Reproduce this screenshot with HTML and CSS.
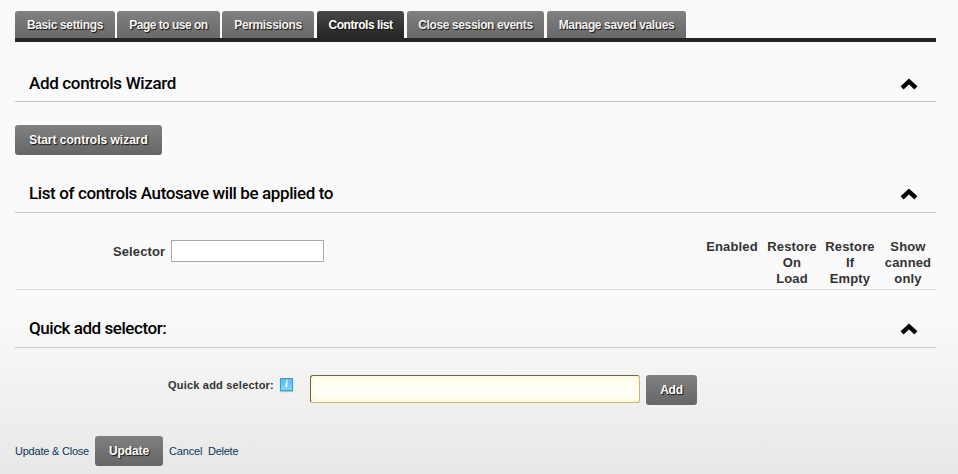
FILE: index.html
```html
<!DOCTYPE html>
<html lang="en">
<head>
<meta charset="utf-8">
<title>Autosave settings</title>
<link rel="stylesheet" href="styles.css">
</head>
<body>
<svg class="symbols" aria-hidden="true"><symbol id="chevron" viewBox="0 0 18 12"><path d="M2.1 9.8 9 3.4l6.9 6.4" fill="none" stroke="#000" stroke-width="4.4"/></symbol></svg>
<nav class="tabs">
<a class="tab basic"><span>Basic settings</span></a>
<a class="tab page"><span>Page to use on</span></a>
<a class="tab permissions"><span>Permissions</span></a>
<a class="tab controls active"><span>Controls list</span></a>
<a class="tab session"><span>Close session events</span></a>
<a class="tab saved"><span>Manage saved values</span></a>
</nav>
<section class="wizard">
<header class="heading"><h2 class="title-wizard">Add controls Wizard</h2><svg class="chevron"><use href="#chevron"/></svg></header>
<button class="button start"><span>Start controls wizard</span></button>
</section>
<section class="list">
<header class="heading"><h2 class="title-list">List of controls Autosave will be applied to</h2><svg class="chevron"><use href="#chevron"/></svg></header>
<div class="filter">
<label for="selector">Selector</label><input id="selector" class="selector">
<div class="columns"><span>Enabled</span><span>Restore<br>On<br>Load</span><span>Restore<br>If<br>Empty</span><span>Show<br>canned<br>only</span></div>
</div>
</section>
<section class="quick">
<header class="heading"><h2 class="title-quick">Quick add selector:</h2><svg class="chevron"><use href="#chevron"/></svg></header>
<div class="quick-row">
<label for="quick">Quick add selector:</label>
<span class="info">i</span>
<input id="quick" class="quick-input">
<button class="button add"><span>Add</span></button>
</div>
</section>
<footer class="actions"><a class="update-close">Update &amp; Close</a><button class="button update"><span>Update</span></button><a class="cancel">Cancel</a><a class="delete">Delete</a></footer>
</body>
</html>
```
FILE: styles.css
```css
* { box-sizing: border-box; }
html { height: 100%; }
body {
  margin: 0;
  height: 474px;
  padding: 11px 22px 0 15px;
  overflow: hidden;
  color: #333;
  font-family: "Liberation Sans", Arial, sans-serif;
  background: linear-gradient(#fafafa 0, #fafafa 310px, #e8e8e8 474px);
}
.symbols { display: none; }
.tabs { display: flex; height: 31px; border-bottom: 4px solid #262626; }
.tab {
  height: 27px;
  margin-right: 2px;
  border-radius: 3px 3px 0 0;
  background: linear-gradient(#808080, #696969);
  color: #f2f2f2;
  font-size: 12px;
  font-weight: bold;
  line-height: 28px;
  text-align: center;
  white-space: nowrap;
  text-shadow: 1px 1px 1px #111;
}
.basic { width: 100px; letter-spacing: -.38px; }
.page { width: 103px; letter-spacing: -.5px; }
.permissions { width: 92px; margin-right: 3px; letter-spacing: -.35px; }
.controls { width: 87px; margin-right: 3px; letter-spacing: -.45px; }
.session { width: 137px; margin-right: 3px; letter-spacing: -.38px; }
.saved { width: 139px; margin-right: 0; letter-spacing: -.38px; }
.tab.active { color: #fff; background: linear-gradient(#484848, #252525); }
.heading {
  display: flex;
  justify-content: space-between;
  height: 38px;
  padding: 0 18px 0 14px;
  border-bottom: 1px solid #c8c8c8;
}
h2 {
  margin: 0;
  color: #000;
  font: 500 17px/38px Roboto, sans-serif;
  white-space: nowrap;
}
.title-wizard { letter-spacing: -.34px; }
.title-list { letter-spacing: -.39px; }
.title-quick { letter-spacing: -.45px; }
.chevron { width: 18px; height: 12px; margin-top: 14px; }
.wizard { height: 132px; padding-top: 22px; }
.list { height: 116px; }
.list .heading, .quick .heading { height: 39px; }
.filter {
  display: flex;
  height: 77px;
  padding: 27px 0 0 98px;
  border-bottom: 1px solid #dcdcdc;
}
.filter label { width: 58px; font: bold 13px/23px "Liberation Sans", sans-serif; letter-spacing: .1px; }
.selector { width: 153px; height: 22px; border: 1px solid #a9a9a9; background: #fff; }
.columns {
  display: grid;
  grid-template-columns: 62px 58px 58px 58px;
  margin: -1px -1px 0 auto;
  width: 236px;
  font: bold 13px/16px "Liberation Sans", sans-serif;
  letter-spacing: .15px;
  text-align: center;
}
.quick { height: 146px; padding-top: 19px; }
.quick-row { display: flex; padding: 27px 0 0 153px; }
.quick-row label { width: 112px; font-size: 11px; font-weight: bold; line-height: 20px; letter-spacing: .2px; white-space: nowrap; }
.info {
  width: 13px;
  height: 13px;
  margin: 3px 17px 0 0;
  border: 1px solid #3a9fd2;
  box-shadow: 0 1px 1px #b9bdc0;
  background: linear-gradient(#5abbea, #85d3f4);
  color: #fff;
  font: italic bold 10px/10px "Liberation Serif", serif;
  text-align: center;
}
.quick-input {
  width: 330px;
  height: 28px;
  border: 1px solid;
  border-color: #6a6548 #c2b88b #c2b88b #6a6548;
  border-radius: 3px;
  background: #fffff5;
  box-shadow: inset 0 0 6px #fff1c4;
}
.button {
  display: block;
  height: 30px;
  padding: 0;
  border: 0;
  border-radius: 3px;
  background: linear-gradient(#808080, #666);
  color: #fff;
  font: bold 12px/30px "Liberation Sans", sans-serif;
  text-shadow: 1px 1px 1px #111;
}
.start { width: 147px; margin-top: 23px; letter-spacing: 0; }
.add { width: 51px; margin-left: 6px; letter-spacing: -.2px; }
.actions { display: flex; color: #0b3558; font-size: 11px; line-height: 30px; white-space: nowrap; }
.update-close { width: 80px; letter-spacing: -.22px; }
.update { width: 68px; letter-spacing: -.1px; }
.cancel { width: 39px; margin-left: 6px; letter-spacing: -.15px; }
.delete { letter-spacing: -.25px; }
```
